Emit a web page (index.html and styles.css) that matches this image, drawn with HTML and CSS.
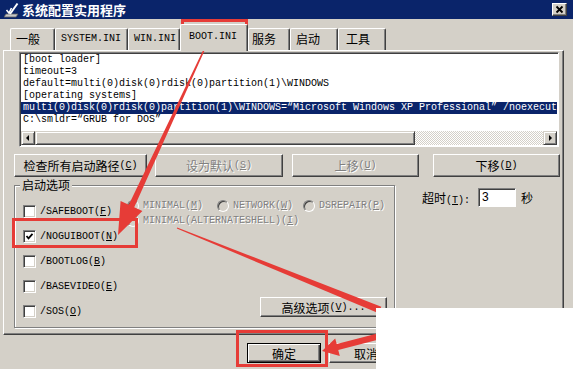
FILE: index.html
```html
<html>

<head>
    <link rel="stylesheet" href="styles.css">
</head>

<body>
    <div class="win">
        <div class="titlebar">
            <svg class="appicon" viewBox="0 0 16 16">
                <polygon points="2,12 14,12 12,15 0,15" fill="#c8c8c8" stroke="#606060" stroke-width="0.8" />
                <line x1="13.5" y1="1.5" x2="6" y2="12" stroke="#fff" stroke-width="2" />
                <polyline points="2.5,8 5,11 7.5,6" fill="none" stroke="#fff" stroke-width="1.6" />
            </svg>
            <span class="title">系统配置实用程序</span>
            <span class="close">
                <svg viewBox="0 0 13 11"><path d="M3.5 2.5 L9.5 8.5 M9.5 2.5 L3.5 8.5" stroke="#000" stroke-width="1.8" /></svg>
            </span>
        </div>

        <div class="tabs">
            <div class="tab t1">一般</div>
            <div class="tab t2"><span class="a">SYSTEM.INI</span></div>
            <div class="tab t3"><span class="a">WIN.INI</span></div>
            <div class="tab t4 sel"><span class="a">BOOT.INI</span></div>
            <div class="tab t5">服务</div>
            <div class="tab t6">启动</div>
            <div class="tab t7">工具</div>
        </div>

        <div class="panel">
            <div class="editbox">
                <div class="lines">
                    <div class="ln">[boot loader]</div>
                    <div class="ln">timeout=3</div>
                    <div class="ln">default=multi(0)disk(0)rdisk(0)partition(1)\WINDOWS</div>
                    <div class="ln">[operating systems]</div>
                    <div class="ln hl">multi(0)disk(0)rdisk(0)partition(1)\WINDOWS=“Microsoft Windows XP Professional” /noexecute=optin /fastdetect</div>
                    <div class="ln">C:\smldr=“GRUB for DOS”</div>
                </div>
                <div class="hscroll">
                    <div class="sbtn">
                        <svg viewBox="0 0 12 12"><polygon points="4,6 7,3 7,9" fill="#000" /></svg>
                    </div>
                    <div class="thumb"></div>
                    <div class="track"></div>
                    <div class="sbtn">
                        <svg viewBox="0 0 12 12"><polygon points="8,6 5,3 5,9" fill="#000" /></svg>
                    </div>
                </div>
            </div>

            <div class="btnrow">
                <div class="btn b1">检查所有启动路径<span class="a">(<u>C</u>)</span></div>
                <div class="btn b2 dis">设为默认<span class="a">(<u>S</u>)</span></div>
                <div class="btn b3 dis">上移<span class="a">(<u>U</u>)</span></div>
                <div class="btn b4">下移<span class="a">(<u>D</u>)</span></div>
            </div>

            <div class="lower">
                <div class="group">
                    <span class="legend">启动选项</span>
                    <div class="groupbody">
                        <div class="checks">
                            <div class="chk"><span class="box"></span><span class="a">/SAFEBOOT(<u>F</u>)</span></div>
                            <div class="chk"><span class="box">
                                    <svg viewBox="0 0 9 9"><polyline points="1.5,4 3.5,6.3 7.5,1.8" fill="none" stroke="#000" stroke-width="1.8" /></svg>
                                </span><span class="a">/NOGUIBOOT(<u>N</u>)</span></div>
                            <div class="chk"><span class="box"></span><span class="a">/BOOTLOG(<u>B</u>)</span></div>
                            <div class="chk"><span class="box"></span><span class="a">/BASEVIDEO(<u>E</u>)</span></div>
                            <div class="chk"><span class="box"></span><span class="a">/SOS(<u>O</u>)</span></div>
                        </div>
                        <div class="gright">
                            <div class="radios">
                                <div class="rrow">
                                    <div class="radio r1"><span class="dot"></span><span class="a">MINIMAL(<u>M</u>)</span></div>
                                    <div class="radio r2"><span class="dot"></span><span class="a">NETWORK(<u>W</u>)</span></div>
                                    <div class="radio"><span class="dot"></span><span class="a">DSREPAIR(<u>P</u>)</span></div>
                                </div>
                                <div class="rrow">
                                    <div class="radio"><span class="dot"></span><span class="a">MINIMAL(ALTERNATESHELL)(<u>I</u>)</span></div>
                                </div>
                            </div>
                            <div class="btn adv">高级选项<span class="a">(<u>V</u>)...</span></div>
                        </div>
                    </div>
                </div>

                <div class="timeout">
                    <span>超时<span class="a">(<u>T</u>):</span></span>
                    <span class="field">3</span>
                    <span>秒</span>
                </div>
            </div>
        </div>

        <div class="footer">
            <div class="btn ok">确定</div>
            <div class="btn cancel">取消</div>
        </div>

        <svg class="marks" viewBox="0 0 573 369">
            <rect x="182.5" y="20.5" width="64" height="28" fill="none" stroke="#e63c37" stroke-width="3" />
            <rect x="13.5" y="219.5" width="123" height="27" fill="none" stroke="#e63c37" stroke-width="3" />
            <rect x="237.5" y="331.5" width="89" height="34" fill="none" stroke="#e63c37" stroke-width="3" />
            <polygon fill="#e63c37" points="203.3,49.7 204.7,50.3 134.2,207.3 142.4,211.1 118,235 120.6,200.9 128.8,204.7" />
            <polygon fill="#e63c37" points="177.2,227.5 381.3,306.8 378.7,313.2 176.8,228.5" />
            <polygon fill="#e63c37" points="379.25,333.1 380.75,338.9 338.25,349.9 339.8,356 322,351 335.2,338.4 336.75,344.1" />
        </svg>

        <div class="cover"></div>
    </div>
</body>

</html>
```

FILE: styles.css
```css
body {
    margin: 0;
    background: #d4d0c8;
    font-family: "Noto Sans CJK SC", sans-serif;
    font-size: 12px;
    color: #000;
}

.win {
    position: relative;
    width: 573px;
    height: 369px;
    overflow: hidden;
}

.a {
    font-family: "Liberation Mono", monospace;
    font-size: 10px;
}

/* title bar */
.titlebar {
    height: 19px;
    background: #0a246a;
    display: flex;
    align-items: center;
    padding: 0 6px 0 4px;
}
.appicon {
    width: 16px;
    height: 16px;
}
.title {
    color: #fff;
    font-weight: bold;
    font-size: 13px;
    line-height: 19px;
    margin-left: 2px;
}
.close {
    margin-left: auto;
    width: 15px;
    height: 13px;
    box-sizing: border-box;
    background: #d4d0c8;
    border: 1px solid;
    border-color: #fff #404040 #404040 #fff;
    box-shadow: inset -1px -1px #808080;
    display: flex;
}
.close svg {
    width: 13px;
    height: 11px;
}

/* tabs */
.tabs {
    height: 31px;
    display: flex;
    align-items: flex-end;
    padding-left: 10px;
}
.tab {
    height: 22px;
    box-sizing: border-box;
    border-top: 1px solid #fff;
    border-left: 1px solid #fff;
    border-right: 1px solid #404040;
    box-shadow: inset -1px 0 #808080;
    border-radius: 2px 2px 0 0;
    line-height: 20px;
    white-space: nowrap;
    padding-left: 5px;
}
.tab.sel {
    height: 27px;
    margin-bottom: -1px;
    position: relative;
    z-index: 1;
    background: #d4d0c8;
    line-height: 24px;
}
.t1 { width: 45px; }
.t2 { width: 73px; }
.t3 { width: 52px; }
.t4 { width: 68px; padding-left: 8px; }
.t5 { width: 42px; padding-left: 3px; }
.t6 { width: 48px; }
.t7 { width: 48px; padding-left: 7px; }

/* tab page */
.panel {
    margin-left: 3px;
    width: 561px;
    height: 285px;
    box-sizing: border-box;
    border: 1px solid;
    border-color: #fff #404040 #404040 #fff;
    box-shadow: inset -1px -1px #808080;
    padding: 1px 0 0 10px;
}

.editbox {
    margin-left: 5px;
    width: 540px;
    height: 95px;
    box-sizing: border-box;
    border: 1px solid;
    border-color: #808080 #fff #fff #808080;
    box-shadow: inset 1px 1px #404040;
    background: #fff;
    padding: 1px;
    display: flex;
    flex-direction: column;
}
.lines {
    flex: 1;
    overflow: hidden;
    font-family: "Liberation Mono", monospace;
    font-size: 10px;
    line-height: 12px;
}
.ln {
    white-space: pre;
    padding-left: 2px;
}
.ln.hl {
    background: #0a246a;
    color: #fff;
}

.hscroll {
    height: 14px;
    display: flex;
}
.sbtn,
.thumb {
    box-sizing: border-box;
    background: #d4d0c8;
    border: 1px solid;
    border-color: #d4d0c8 #404040 #404040 #d4d0c8;
    box-shadow: inset 1px 1px #fff, inset -1px -1px #808080;
}
.sbtn {
    width: 14px;
    display: flex;
}
.sbtn svg {
    width: 12px;
    height: 12px;
}
.thumb {
    width: 380px;
}
.track {
    flex: 1;
    background-color: #d4d0c8;
    background-image: conic-gradient(#fff 25%, #d4d0c8 0 50%, #fff 0 75%, #d4d0c8 0);
    background-size: 2px 2px;
}

/* buttons */
.btn {
    box-sizing: border-box;
    background: #d4d0c8;
    border: 1px solid;
    border-color: #fff #404040 #404040 #fff;
    box-shadow: inset -1px -1px #808080;
    display: flex;
    align-items: center;
    justify-content: center;
    white-space: nowrap;
}
.btn.dis {
    color: #808080;
    text-shadow: 1px 1px #fff;
}

.btnrow {
    display: flex;
    margin-top: 7px;
    height: 23px;
}
.b1 { width: 133px; }
.b2 { width: 128px; margin-left: 8px; }
.b3 { width: 127px; margin-left: 9px; }
.b4 { width: 127px; margin-left: 14px; }

/* boot options */
.lower {
    display: flex;
    margin-top: 2px;
}
.group {
    margin-top: 6px;
    width: 381px;
    height: 143px;
    box-sizing: border-box;
    border: 1px solid #808080;
    box-shadow: inset 1px 1px #fff, 1px 1px #fff;
    display: flex;
    flex-direction: column;
}
.legend {
    align-self: flex-start;
    margin: -7px 0 0 5px;
    padding: 0 2px;
    background: #d4d0c8;
    line-height: 12px;
}
.groupbody {
    flex: 1;
    display: flex;
    padding: 8px 0 0 8px;
}
.checks {
    width: 104px;
}
.chk {
    height: 25px;
    display: flex;
    align-items: center;
    white-space: nowrap;
}
.box {
    width: 13px;
    height: 13px;
    box-sizing: border-box;
    flex: none;
    background: #fff;
    border: 1px solid;
    border-color: #808080 #fff #fff #808080;
    box-shadow: inset 1px 1px #404040, inset -1px -1px #d4d0c8;
    margin-right: 4px;
    padding: 1px 0 0 1px;
    display: flex;
}
.box svg {
    width: 9px;
    height: 9px;
}

.gright {
    flex: 1;
    display: flex;
    flex-direction: column;
    justify-content: space-between;
}
.radios {
    margin-top: -1px;
    color: #808080;
    text-shadow: 1px 1px #fff;
}
.rrow {
    height: 15px;
    display: flex;
    align-items: center;
}
.radio {
    display: flex;
    align-items: center;
    white-space: nowrap;
}
.r1 { width: 90px; }
.r2 { width: 86px; }
.dot {
    width: 12px;
    height: 12px;
    box-sizing: border-box;
    border-radius: 50%;
    border: 1px solid;
    border-color: #808080 #fff #fff #808080;
    box-shadow: inset 1px 1px #404040;
    background: #d4d0c8;
    margin-right: 4px;
}
.adv {
    align-self: flex-end;
    width: 127px;
    height: 20px;
    margin: 0 7px 10px 0;
}

.timeout {
    display: flex;
    align-items: center;
    margin: 9px 0 0 27px;
    height: 19px;
    white-space: nowrap;
}
.field {
    width: 38px;
    height: 19px;
    box-sizing: border-box;
    background: #fff;
    border: 1px solid;
    border-color: #808080 #fff #fff #808080;
    box-shadow: inset 1px 1px #404040;
    margin: 0 5px 0 8px;
    padding-left: 3px;
    font-family: "Liberation Sans", sans-serif;
    font-size: 12px;
    line-height: 17px;
}

/* dialog buttons */
.footer {
    display: flex;
    margin: 8px 0 0 247px;
    height: 20px;
}
.footer .btn {
    width: 74px;
}
.btn.ok {
    border: 1px solid #000;
    box-shadow: inset 1px 1px #fff, inset -1px -1px #404040, inset -2px -2px #808080;
}
.cancel {
    margin-left: 8px;
}

/* annotations */
.marks {
    position: absolute;
    left: 0;
    top: 0;
    width: 573px;
    height: 369px;
    pointer-events: none;
}
.cover {
    position: absolute;
    left: 376px;
    top: 308px;
    right: 0;
    bottom: 0;
    background: #fff;
}
```
